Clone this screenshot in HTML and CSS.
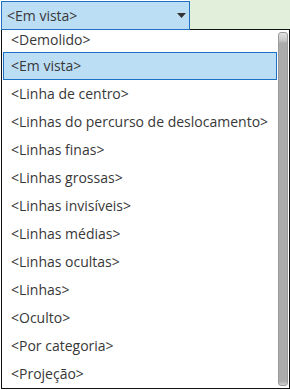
FILE: index.html
```html
<!DOCTYPE html>
<html>
<head>
<meta charset="utf-8">
<link rel="stylesheet" href="styles.css">
</head>
<body>
<div class="page">
  <div class="top">
    <div class="combo">
      <span class="combo-text">&lt;Em vista&gt;</span>
      <svg class="arrow" width="9" height="5" viewBox="0 0 9 5"><path d="M0 0H9L4.5 5Z" fill="#333"/></svg>
    </div>
    <div class="green"></div>
  </div>
  <div class="list">
    <div class="items-wrap">
      <ul class="items">
        <li class="first">&lt;Demolido&gt;</li>
        <li class="selected">&lt;Em vista&gt;</li>
        <li>&lt;Linha de centro&gt;</li>
        <li>&lt;Linhas do percurso de deslocamento&gt;</li>
        <li>&lt;Linhas finas&gt;</li>
        <li>&lt;Linhas grossas&gt;</li>
        <li>&lt;Linhas invisíveis&gt;</li>
        <li>&lt;Linhas médias&gt;</li>
        <li>&lt;Linhas ocultas&gt;</li>
        <li>&lt;Linhas&gt;</li>
        <li>&lt;Oculto&gt;</li>
        <li>&lt;Por categoria&gt;</li>
        <li>&lt;Projeção&gt;</li>
      </ul>
    </div>
    <div class="scrollbar"><div class="thumb"></div></div>
  </div>
</div>
</body>
</html>
```
FILE: styles.css
```css
html, body {
  margin: 0;
  padding: 0;
  background: #ffffff;
}
body {
  font-family: "Open Sans", "Noto Sans", sans-serif;
  font-size: 14px;
  color: #383838;
}
.page {
  width: 290px;
  height: 390px;
  overflow: hidden;
}
.top {
  display: flex;
  height: 29px;
}
.combo {
  box-sizing: border-box;
  width: 189px;
  height: 29px;
  margin-left: 1px;
  margin-top: 1px;
  border: 1px solid #1f6fc5;
  background: #bcdef5;
  display: flex;
  align-items: center;
  justify-content: space-between;
  padding: 0 3px 0 5px;
}
.combo-text {
  line-height: 26px;
}
.arrow {
  display: block;
}
.green {
  flex: 1;
  background: #e2efda;
}
.list {
  box-sizing: border-box;
  width: 289px;
  height: 360px;
  margin-left: 1px;
  border: 1px solid #111111;
  display: flex;
  background: #ffffff;
}
.items-wrap {
  flex: 1;
  overflow: hidden;
}
.items {
  list-style: none;
  margin: 0;
  padding: 0;
}
.items li {
  box-sizing: border-box;
  height: 28px;
  line-height: 28px;
  padding-left: 8px;
  margin: 0 1px 0 1px;
  white-space: nowrap;
}
.items li.first {
  height: 22px;
  line-height: 19px;
}
.items li.selected {
  border: 1px solid #1f6fc5;
  background: #bcdef5;
  line-height: 26px;
  padding-left: 7px;
}
.scrollbar {
  width: 11px;
  padding: 2px 1px 2px 0;
  box-sizing: border-box;
  display: flex;
}
.thumb {
  flex: 1;
  border: 1px solid #9a9a9a;
  border-radius: 3px;
  background: linear-gradient(to bottom, #e2e2e2 0, #c4c4c4 8px, #ababab 10px, #ababab calc(100% - 4px), #cfcfcf 100%);
}
```
